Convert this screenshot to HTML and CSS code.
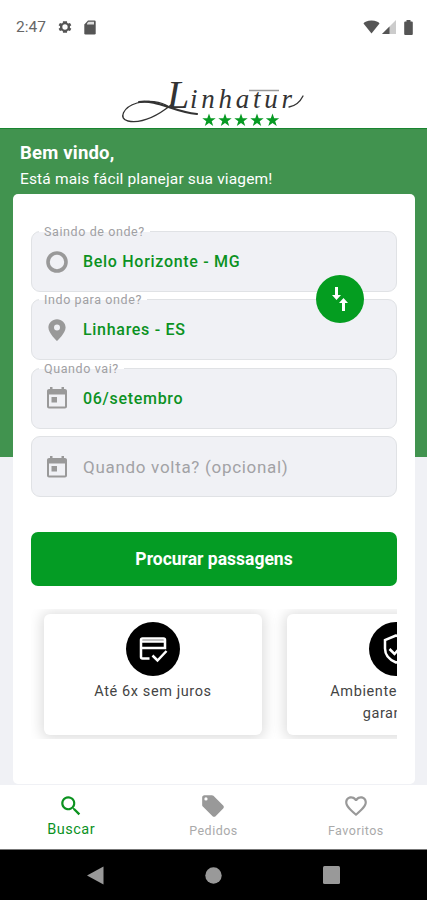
FILE: index.html
```html
<!DOCTYPE html>
<html lang="pt-BR">

<head>
    <meta charset="UTF-8">
    <meta name="viewport" content="width=device-width, initial-scale=1.0">
    <title>Linhatur</title>
    <link rel="stylesheet" href="styles.css">
</head>

<body>
    <div class="app">

        <div class="status-bar">
            <span class="clock">2:47</span>
            <svg class="status-gear" viewBox="0 0 24 24" width="16" height="16">
                <path fill-rule="evenodd" d="M19.4 13a7.500 7.500 0 0 0 0-2l2.100-1.600-2-3.500-2.500 1a7.600 7.600 0 0 0-1.700-1L15 3.200H9l-.4 2.700a7.600 7.600 0 0 0-1.700 1l-2.500-1-2 3.500L4.600 11a7.500 7.500 0 0 0 0 2l-2.200 1.600 2 3.500 2.500-1a7.600 7.600 0 0 0 1.700 1l.4 2.700h6l.3-2.700a7.600 7.600 0 0 0 1.700-1l2.500 1 2-3.500zM12 16a4 4 0 1 1 0-8 4 4 0 0 1 0 8z"/>
            </svg>
            <svg class="status-card" viewBox="0 0 12 15" width="12" height="15">
                <path d="M4 .5h6.500q1.200 0 1.200 1.200v11.600q0 1.200-1.200 1.200h-9q-1.200 0-1.200-1.200V4.500z"/>
                <path fill="#ddd" d="M4.500 1.800H10v2.700H3V3.300z"/>
            </svg>
            <div class="status-right">
                <svg viewBox="0 0 17 14" width="17" height="14">
                    <path d="M8.500 13.500.5 3.500Q2 .8 8.500.5q6.500.3 8 3z"/>
                </svg>
                <svg viewBox="0 0 14 14" width="14" height="14">
                    <path fill="#ccc" d="M14 0v14H0z"/>
                    <path d="M7.500 6.500V14H0z"/>
                </svg>
                <svg class="battery" viewBox="0 0 9 15" width="9" height="15">
                    <path d="M2.500 1.500V0h4v1.500h1.300q1 0 1 1V14q0 1-1 1H1.200q-1 0-1-1V2.500q0-1 1-1z"/>
                </svg>
            </div>
        </div>

        <header class="header">
            <svg class="logo" viewBox="0 0 190 56" width="190" height="56">
                <!-- swash under the name -->
                <path class="swash" d="M50 37C42 31 28 30 18 33C4 37 -1 49 9 51C25 54 42 43 52 35"/>
                <path class="swash thick" d="M20 32C38 29 54 42 78 44"/>
                <path class="bar" d="M130 20.500H160"/>
                <text class="logo-name" x="48" y="38"><tspan class="initial">L</tspan><tspan x="71" textLength="102" lengthAdjust="spacing">inhatur</tspan></text>
                <path class="swash" d="M170 37C176 36 181 32 184 26"/>
                <g class="stars">
                    <path id="star" d="M90 43.500l1.700 4.700h5l-4 3 1.500 4.800-4.200-2.900-4.200 2.900 1.500-4.800-4-3h5z"/>
                    <use href="#star" x="16"/>
                    <use href="#star" x="32"/>
                    <use href="#star" x="48"/>
                    <use href="#star" x="63.500"/>
                </g>
            </svg>
        </header>

        <main class="main">
            <div class="welcome">
                <h1>Bem vindo,</h1>
                <p>Está mais fácil planejar sua viagem!</p>
            </div>

            <div class="panel">
                <div class="fields">
                    <div class="field">
                        <span class="field-label">Saindo de onde?</span>
                        <svg class="field-icon" viewBox="0 0 24 24"><circle cx="12" cy="12" r="9" fill="none" stroke="#999" stroke-width="3.600"/></svg>
                        <span class="field-value city">Belo Horizonte - MG</span>
                    </div>
                    <div class="field">
                        <span class="field-label">Indo para onde?</span>
                        <svg class="field-icon" viewBox="0 0 24 24"><path fill-rule="evenodd" d="M12 1.200c-4.900 0-8.600 3.800-8.600 8.300 0 5.800 8.600 13.500 8.600 13.500s8.600-7.700 8.600-13.500c0-4.500-3.700-8.300-8.600-8.300zm0 11.300a3 3 0 1 1 0-6 3 3 0 0 1 0 6z"/></svg>
                        <span class="field-value city">Linhares - ES</span>
                        <button class="swap">
                            <svg viewBox="0 0 18 26" width="18" height="26">
                                <path d="M4 1h3v8h3l-4.500 5L1 9h3z"/>
                                <path d="M11 25h3v-8h3l-4.500-5L8 17h3z"/>
                            </svg>
                        </button>
                    </div>
                    <div class="field">
                        <span class="field-label">Quando vai?</span>
                        <svg class="field-icon" viewBox="0 0 24 24"><path fill-rule="evenodd" d="M20 3h-1V1h-2.500v2h-9V1H5v2H4C2.900 3 2 3.900 2 5v15.500c0 1.100.9 2 2 2h16c1.100 0 2-.9 2-2V5c0-1.100-.9-2-2-2zm0 17.500H4V8.500h16z"/><path d="M6.500 11h5.500v5.500H6.500z"/></svg>
                        <span class="field-value">06/setembro</span>
                    </div>
                    <div class="field">
                        <svg class="field-icon" viewBox="0 0 24 24"><path fill-rule="evenodd" d="M20 3h-1V1h-2.500v2h-9V1H5v2H4C2.900 3 2 3.900 2 5v15.500c0 1.100.9 2 2 2h16c1.100 0 2-.9 2-2V5c0-1.100-.9-2-2-2zm0 17.500H4V8.500h16z"/><path d="M6.500 11h5.500v5.500H6.500z"/></svg>
                        <span class="field-value placeholder">Quando volta? (opcional)</span>
                    </div>
                </div>

                <button class="search-button">Procurar passagens</button>

                <div class="carousel">
                    <div class="benefit">
                        <div class="benefit-icon">
                            <svg viewBox="0 0 30 28" width="30" height="28">
                                <path d="M11.500 23.500H4.500Q3 23.500 3 22V5Q3 3.500 4.500 3.500h21q1.500 0 1.500 1.500v8H3M3 6.500h24M14.500 20.500l5 5 9-9.500"/>
                            </svg>
                        </div>
                        <p>Até 6x sem juros</p>
                    </div>
                    <div class="benefit">
                        <div class="benefit-icon">
                            <svg viewBox="0 0 30 32" width="30" height="32">
                                <path d="M15 2.500L4 7v8.500q0 9.500 11 14 11-4.500 11-14V7zM8.500 16l5 5 8-9"/>
                            </svg>
                        </div>
                        <p>Ambiente seguro e garantido</p>
                    </div>
                </div>
            </div>
        </main>

        <nav class="tabs">
            <a class="tab active">
                <svg viewBox="0 0 24 24" width="26" height="26"><path d="M15.500 14h-.8l-.3-.3A6.500 6.500 0 1 0 13.700 14.400l.3.3v.8l5 5 1.500-1.500zm-6 0a4.500 4.500 0 1 1 0-9 4.500 4.500 0 0 1 0 9z"/></svg>
                <span>Buscar</span>
            </a>
            <a class="tab">
                <svg viewBox="0 0 24 24" width="26" height="26"><path fill-rule="evenodd" d="M21.400 11.600l-9-9C12 2.200 11.500 2 11 2H4c-1.100 0-2 .9-2 2v7c0 .6.200 1.100.6 1.400l9 9c.8.8 2 .8 2.800 0l7-7c.8-.8.8-2 0-2.800zM5.500 7a1.500 1.500 0 1 1 0-3 1.500 1.500 0 0 1 0 3z"/></svg>
                <span>Pedidos</span>
            </a>
            <a class="tab">
                <svg viewBox="0 0 24 24" width="26" height="26"><path d="M16.500 3c-1.700 0-3.400.8-4.500 2.100C10.900 3.800 9.200 3 7.500 3 4.400 3 2 5.400 2 8.500c0 3.800 3.400 6.900 8.600 11.500l1.400 1.300 1.400-1.300C18.600 15.400 22 12.300 22 8.500 22 5.400 19.600 3 16.500 3zm-4.400 15.600l-.1.100-.1-.1C7.100 14.200 4 11.400 4 8.500 4 6.500 5.500 5 7.500 5c1.500 0 3 1 3.600 2.400h1.900C13.500 6 15 5 16.500 5c2 0 3.500 1.500 3.500 3.500 0 2.900-3.100 5.700-7.900 10.100z"/></svg>
                <span>Favoritos</span>
            </a>
        </nav>

        <div class="system-nav">
            <svg viewBox="0 0 17 19" width="17" height="19"><path d="M16.500.5v18L0 9.500z"/></svg>
            <svg viewBox="0 0 17 17" width="17" height="17"><circle cx="8.500" cy="8.500" r="8.200"/></svg>
            <svg viewBox="0 0 17 18" width="17" height="18"><rect width="17" height="18" rx="1.500"/></svg>
        </div>

    </div>
</body>

</html>
```
FILE: styles.css
```css
* {
    box-sizing: border-box;
}

body {
    margin: 0;
    background: #fff;
    font-family: Roboto, sans-serif;
}

h1,
p {
    margin: 0;
}

button {
    border: 0;
    padding: 0;
    font-family: inherit;
}

svg {
    display: block;
    flex: none;
}

.app {
    display: flex;
    flex-direction: column;
    height: 900px;
    width: 427px;
    overflow: hidden;
}

/* status bar */
.status-bar {
    display: flex;
    align-items: center;
    height: 54px;
    padding: 0 14px 0 16px;
    color: #666;
    fill: #555;
}

.clock {
    width: 41px;
    font-size: 15.5px;
}

.status-card {
    margin-left: 11px;
}

.status-right {
    display: flex;
    align-items: center;
    gap: 2px;
    margin-left: auto;
}

.battery {
    margin-left: 6px;
}

/* logo */
.header {
    display: flex;
    justify-content: center;
    height: 74px;
    padding-top: 16px;
}

.logo {
    overflow: visible;
}

.logo-name {
    font-family: "Liberation Serif", serif;
    font-style: italic;
    font-size: 27px;
    fill: #333;
}

.initial {
    font-size: 40px;
}

.swash {
    fill: none;
    stroke: #333;
    stroke-width: 1.3;
    stroke-linecap: round;
}

.thick {
    stroke-width: 2.2;
}

.bar {
    stroke: #999;
    stroke-width: 1.5;
}

.stars {
    fill: #079a23;
}

/* content */
.main {
    height: 657px;
    padding: 0 12px 0 13px;
    background: linear-gradient(#41934f 328px, #f0f1f5 328px);
    border-top: 1px solid #198530;
}

.welcome {
    height: 65px;
    padding: 12px 7px 0;
    color: #fff;
}

.welcome h1 {
    font-size: 18.5px;
    line-height: 24px;
    font-weight: 700;
    letter-spacing: 0.2px;
}

.welcome p {
    margin-top: 4px;
    font-size: 15.5px;
    line-height: 21px;
    letter-spacing: 0.15px;
}

.panel {
    height: 590px;
    padding: 37px 18px 0;
    background: #fff;
    border-radius: 5px;
}

.fields {
    display: flex;
    flex-direction: column;
    gap: 7.4px;
}

.field {
    position: relative;
    display: flex;
    align-items: center;
    height: 61px;
    padding-left: 13px;
    background: #f0f1f5;
    border: 1px solid #e0e2e5;
    border-radius: 9px;
}

.field-label {
    position: absolute;
    top: -8px;
    left: 7px;
    padding: 0 5px;
    background: linear-gradient(#fff 8px, #f0f1f5 8px);
    color: #a0a0a3;
    font-size: 12.5px;
    line-height: 15px;
    letter-spacing: 0.6px;
}

.field-icon {
    width: 24px;
    height: 24px;
    margin-right: 14px;
    fill: #999;
}

.field-value {
    color: #0b921f;
    font-size: 16px;
    font-weight: 500;
    letter-spacing: 0.7px;
}

.placeholder {
    color: #a2a2a5;
    font-size: 17px;
    font-weight: 400;
}

.swap {
    position: absolute;
    top: -25px;
    right: 32px;
    z-index: 1;
    display: flex;
    align-items: center;
    justify-content: center;
    width: 48px;
    height: 48px;
    border-radius: 50%;
    background: #049d20;
    fill: #fff;
}

.search-button {
    display: block;
    width: 100%;
    height: 54px;
    margin-top: 35px;
    border-radius: 7px;
    background: #049c24;
    color: #fff;
    font-size: 17.5px;
    font-weight: 700;
}

.carousel {
    display: flex;
    gap: 25px;
    height: 130px;
    margin-top: 23px;
    padding: 5px 0 4px 13px;
    overflow: hidden;
}

.benefit {
    flex: none;
    display: flex;
    flex-direction: column;
    align-items: center;
    width: 218px;
    padding: 8px 30px 0;
    border-radius: 6px;
    background: #fff;
    box-shadow: 0 1px 13px 3px rgba(0, 0, 0, 0.13);
}

.benefit-icon {
    display: flex;
    align-items: center;
    justify-content: center;
    width: 54px;
    height: 54px;
    border-radius: 50%;
    background: #000;
}

.benefit-icon svg {
    fill: none;
    stroke: #fff;
    stroke-width: 2.5;
}

.benefit p {
    margin-top: 5px;
    color: #444;
    font-size: 14.5px;
    line-height: 22px;
    letter-spacing: 0.6px;
    text-align: center;
}

/* bottom tabs */
.tabs {
    display: flex;
    height: 64px;
    background: #fff;
}

.tab {
    flex: 1;
    display: flex;
    flex-direction: column;
    align-items: center;
    padding-top: 8px;
    color: #aaa;
    fill: #999;
    font-size: 12.5px;
    letter-spacing: 0.5px;
}

.tab span {
    margin-top: 4px;
    line-height: 16px;
}

.tab.active {
    color: #0b921f;
    fill: #0b921f;
    font-size: 14.5px;
}

.tab.active span {
    margin-top: 3px;
}

/* android buttons */
.system-nav {
    display: flex;
    justify-content: space-between;
    align-items: center;
    height: 51px;
    padding: 0 87px;
    background: #000;
    border-top: 1px solid #777;
    fill: #999;
}
```
